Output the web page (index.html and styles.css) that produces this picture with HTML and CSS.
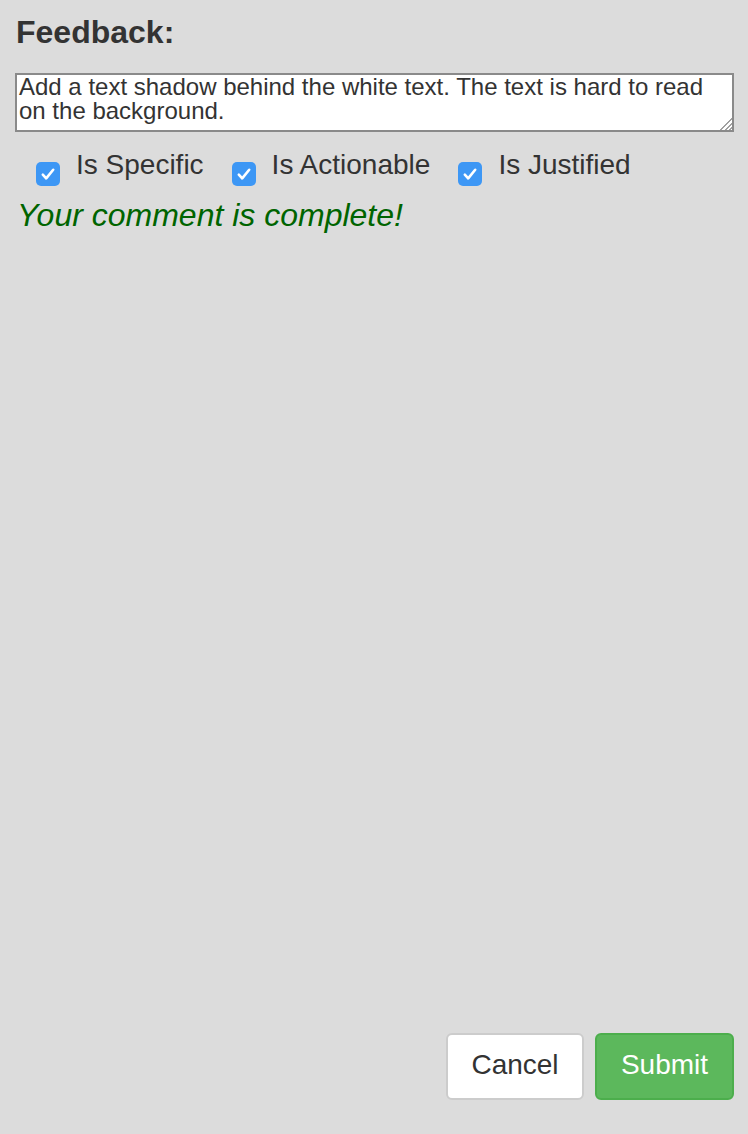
FILE: index.html
```html
<!DOCTYPE html>
<html>
<head>
<meta charset="utf-8">
<link rel="stylesheet" href="styles.css">
</head>
<body>
<div class="page">
  <h2 class="title">Feedback:</h2>
  <textarea class="comment">Add a text shadow behind the white text. The text is hard to read on the background.</textarea>
  <div class="checks">
    <label class="check"><span class="box"><svg viewBox="0 0 24 24" width="24" height="24"><path d="M6.8 12.6l3.4 3.8L17.2 7.8" fill="none" stroke="#fff" stroke-width="2.6" stroke-linecap="round" stroke-linejoin="round"/></svg></span><span class="lbl">Is Specific</span></label>
    <label class="check"><span class="box"><svg viewBox="0 0 24 24" width="24" height="24"><path d="M6.8 12.6l3.4 3.8L17.2 7.8" fill="none" stroke="#fff" stroke-width="2.6" stroke-linecap="round" stroke-linejoin="round"/></svg></span><span class="lbl">Is Actionable</span></label>
    <label class="check"><span class="box"><svg viewBox="0 0 24 24" width="24" height="24"><path d="M6.8 12.6l3.4 3.8L17.2 7.8" fill="none" stroke="#fff" stroke-width="2.6" stroke-linecap="round" stroke-linejoin="round"/></svg></span><span class="lbl">Is Justified</span></label>
  </div>
  <p class="status">Your comment is complete!</p>
  <div class="spacer"></div>
  <div class="actions">
    <button class="btn cancel">Cancel</button>
    <button class="btn submit">Submit</button>
  </div>
</div>
</body>
</html>
```
FILE: styles.css
```css
html, body {
  margin: 0;
  padding: 0;
  background: #dcdcdc;
  font-family: "Liberation Sans", Arial, sans-serif;
  color: #333;
}
.page {
  height: 1134px;
  box-sizing: border-box;
  padding: 13px 14px 34px 15px;
  display: flex;
  flex-direction: column;
}
.title {
  margin: 0 0 0 1px;
  font-size: 32px;
  font-weight: bold;
  line-height: 38px;
}
.comment {
  margin-top: 22px;
  display: block;
  box-sizing: border-box;
  width: 719px;
  height: 59px;
  border: 2px solid #8a8a8a;
  background: #fff;
  font-family: "Liberation Sans", Arial, sans-serif;
  font-size: 24px;
  line-height: 24px;
  color: #333;
  padding: 0 2px;
  resize: both;
  overflow: hidden;
}
.comment::-webkit-resizer {
  background:
    linear-gradient(to bottom right, #fff 50%, transparent 50%),
    repeating-linear-gradient(135deg, transparent 0 2px, #a0a0a0 2px 3.4px),
    #fff;
}
.checks {
  display: flex;
  margin-top: 18px;
  padding-left: 21px;
  gap: 28px;
}
.check {
  display: flex;
  align-items: flex-start;
  gap: 16px;
}
.box {
  margin-top: 12px;
  width: 24px;
  height: 24px;
  border-radius: 5px;
  background: #3d97f5;
  display: block;
}
.box svg { display: block; }
.lbl {
  font-size: 28px;
  line-height: 30px;
}
.status {
  margin: 12px 0 0 2px;
  font-size: 32px;
  font-style: italic;
  color: #006400;
  line-height: 34px;
}
.spacer { flex: 1; }
.actions {
  display: flex;
  justify-content: flex-end;
  gap: 11px;
}
.btn {
  height: 67px;
  font-family: "Liberation Sans", Arial, sans-serif;
  font-size: 28px;
  border-radius: 6px;
  padding: 0 0 3px;
  box-sizing: border-box;
}
.cancel {
  width: 138px;
  background: #fff;
  border: 2px solid #ccc;
  color: #333;
}
.submit {
  width: 139px;
  background: #5cb85c;
  border: 2px solid #4cae4c;
  color: #fff;
}
```
